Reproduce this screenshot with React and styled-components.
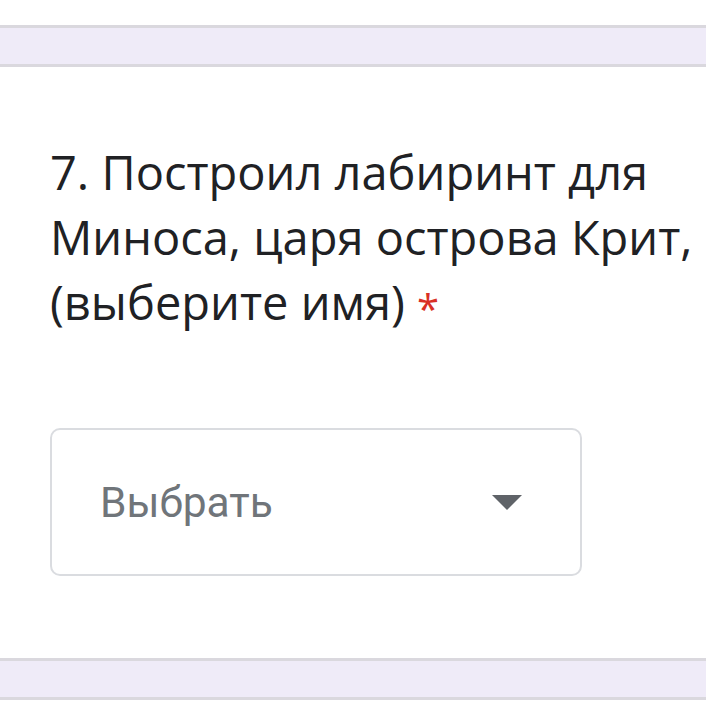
import React from "react";
import styled, { createGlobalStyle } from "styled-components";

const GlobalStyle = createGlobalStyle`
  body {
    margin: 0;
    background: #fff;
    overflow: hidden;
  }
`;

export default function App() {
  return (
    <>
      <GlobalStyle />
      <Page>
        <TopSpace />
        <Band />
        <Card>
          <Question>
            7. Построил лабиринт для Миноса, царя острова Крит, (выберите
            имя) <Required>*</Required>
          </Question>
          <Select>
            <Placeholder>Выбрать</Placeholder>
            <Arrow viewBox="0 0 30 15">
              <path d="M0 0h30L15 15z" fill="#5f6368" />
            </Arrow>
          </Select>
        </Card>
        <Band />
      </Page>
    </>
  );
}

const Page = styled.div`
  display: flex;
  flex-direction: column;
  width: 706px;
  height: 705px;
  background: #fff;
`;
const TopSpace = styled.div`
  height: 25px;
`;
const Band = styled.div`
  height: 36px;
  background: #efebf8;
  border-top: 3px solid #dad8de;
  border-bottom: 3px solid #dad8de;
`;
const Card = styled.div`
  display: flex;
  flex-direction: column;
  align-items: flex-start;
  padding: 73px 0 82px 50px;
  background: #fff;
`;
const Question = styled.div`
  width: 656px;
  font-family: "Open Sans", sans-serif;
  font-size: 47px;
  line-height: 65px;
  color: #202124;
`;
const Required = styled.span`
  color: #d93025;
  font-size: 40px;
  line-height: 1;
  vertical-align: -4px;
`;
const Select = styled.div`
  display: flex;
  align-items: center;
  justify-content: space-between;
  box-sizing: border-box;
  width: 532px;
  height: 148px;
  margin-top: 93px;
  padding: 0 58px 0 48px;
  border: 2px solid #dadce0;
  border-radius: 10px;
`;
const Placeholder = styled.span`
  font-family: Roboto, sans-serif;
  font-size: 42.5px;
  color: #70757a;
`;
const Arrow = styled.svg`
  width: 30px;
  height: 15px;
`;
